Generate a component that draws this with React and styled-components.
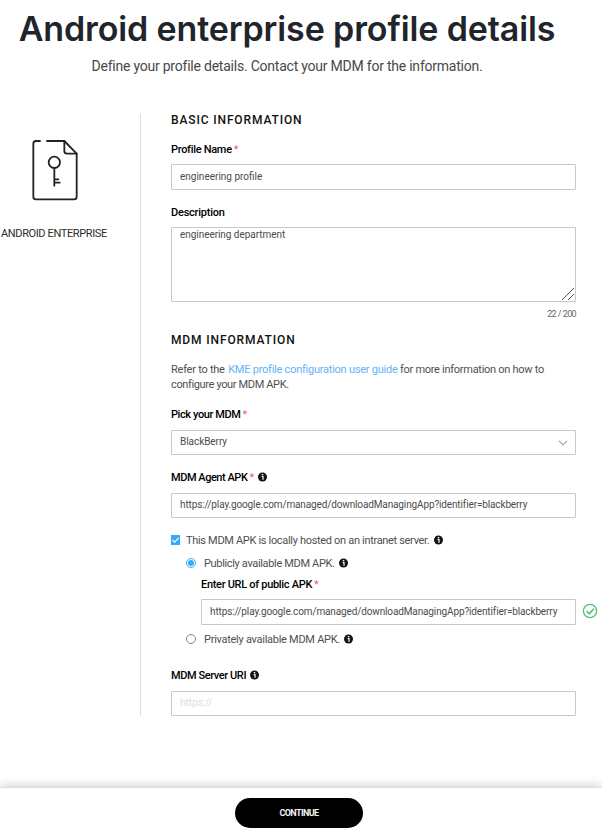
import React, { useState } from "react";
import styled, { createGlobalStyle } from "styled-components";

const GlobalStyle = createGlobalStyle`
  * { box-sizing: border-box; }
  body { margin: 0; background: #fff; font-family: Roboto, "Noto Sans", sans-serif; }
`;

const Page = styled.div`
  display: flex;
  flex-direction: column;
  height: 836px;
  overflow: hidden;
`;
const Header = styled.header`
  width: 574px;
  height: 76px;
  padding-top: 1px;
  text-align: center;
  white-space: nowrap;
`;
const Title = styled.h1`
  margin: 0;
  font: 600 34px/56px Inter, sans-serif;
  letter-spacing: -0.12px;
  color: #21252b;
`;
const Subtitle = styled.p`
  margin: -1px 0 0;
  font-size: 14px;
  line-height: 20px;
  letter-spacing: -0.226px;
  color: #484848;
`;
const Body = styled.main`
  display: grid;
  grid-template-columns: 140px 436px;
  margin-top: 38px;
  height: 602px;
`;
const Sidebar = styled.aside`
  padding: 24px 0 0 1px;
`;
const FileIcon = styled.svg`
  display: block;
  margin-left: 29px;
`;
const SidebarLabel = styled.div`
  margin-top: 24px;
  font-size: 11px;
  line-height: 14px;
  letter-spacing: -0.37px;
  white-space: nowrap;
  color: #2c2c2c;
`;
const Form = styled.form`
  display: flex;
  flex-direction: column;
  padding-left: 30px;
  border-left: 1px solid #dedede;
`;
const SectionTitle = styled.h2`
  margin: ${(p) => p.$top || 0}px 0 0;
  font-size: 12px;
  font-weight: 500;
  line-height: 12px;
  letter-spacing: 0.87px;
  color: #111;
`;
const Label = styled.label`
  display: flex;
  align-items: center;
  height: 14px;
  margin-top: ${(p) => p.$top}px;
  padding-top: 1px;
  font-size: 11px;
  font-weight: 500;
  line-height: 14px;
  letter-spacing: ${(p) => p.$track || -0.3}px;
  white-space: nowrap;
  color: #000;
`;
const Star = styled.span`
  margin-left: 2px;
  font-weight: 400;
  color: #f0645f;
`;
const Input = styled.input`
  display: block;
  width: 100%;
  height: ${(p) => p.$height || 25}px;
  margin: ${(p) => p.$top || 9}px 0 0;
  padding: 0 8px ${(p) => p.$lift || 1}px;
  border: 1px solid #c8c8c8;
  border-radius: 1px;
  outline: none;
  background: #fff;
  font: 400 10px Roboto, sans-serif;
  letter-spacing: ${(p) => p.$track || 0}px;
  color: #4c4c4c;
  &::placeholder { color: #dcdcdc; }
`;
const AreaBox = styled.div`
  display: grid;
  height: 75px;
  margin-top: 8px;
`;
const Area = styled.textarea`
  grid-area: 1 / 1;
  margin: 0;
  padding: 0 8px;
  border: 1px solid #c8c8c8;
  border-radius: 1px;
  outline: none;
  resize: none;
  font: 400 10px/13px Roboto, sans-serif;
  letter-spacing: -0.05px;
  color: #4c4c4c;
`;
const Grip = styled.svg`
  grid-area: 1 / 1;
  place-self: end;
  margin: 0 2px 2px 0;
  z-index: 1;
`;
const Counter = styled.div`
  margin-top: 6px;
  text-align: right;
  font-size: 9px;
  line-height: 12px;
  letter-spacing: -0.68px;
  word-spacing: 0.4px;
  color: #666;
`;
const Note = styled.p`
  margin: 16px 0 0;
  font-size: 11px;
  line-height: 15px;
  letter-spacing: -0.24px;
  white-space: nowrap;
  color: #4f4f4f;
`;
const NoteTail = styled.span`
  letter-spacing: -0.36px;
`;
const Link = styled.a`
  margin-left: 1px;
  color: #64b2f8;
`;
const NoteEnd = styled.span`
  letter-spacing: -0.28px;
`;
const Select = styled.div`
  display: flex;
  align-items: center;
  justify-content: space-between;
  height: 25px;
  margin-top: 9px;
  padding: 0 7px 2px 8px;
  border: 1px solid #c8c8c8;
  border-radius: 1px;
  font-size: 10px;
  letter-spacing: -0.05px;
  color: #4c4c4c;
`;
const Chevron = styled.svg`
  margin-top: 2px;
`;
const Option = styled.label`
  display: flex;
  align-items: center;
  height: 14px;
  margin: ${(p) => p.$top}px 0 0 ${(p) => p.$indent || 0}px;
  font-size: 11px;
  letter-spacing: ${(p) => p.$track || -0.32}px;
  white-space: nowrap;
  color: #4f4f4f;
`;
const Mark = styled.svg`
  flex: none;
  margin-right: ${(p) => p.$gap}px;
`;
const Info = styled.svg`
  flex: none;
  margin: ${(p) => (p.$raised ? "-1px" : "0")} 0 0 ${(p) => p.$gap || 4}px;
`;
const Nested = styled.div`
  padding-left: 30px;
`;
const UrlRow = styled.div`
  display: grid;
  grid-template-columns: 375px 16px;
  column-gap: 6px;
  width: 397px;
  align-items: center;
  margin-top: 8px;
`;
const UrlInput = styled(Input)`
  margin: 0;
`;
const ValidIcon = styled.svg`
  margin-top: -2px;
`;
const Footer = styled.footer`
  display: flex;
  justify-content: center;
  height: 49px;
  margin-top: auto;
  padding: 10px 4px 0 0;
  border-top: 1px solid #dedede;
  box-shadow: 0 -2px 9px rgba(0, 0, 0, 0.17);
`;
const Button = styled.button`
  width: 128px;
  height: 30px;
  padding: 0;
  border: 0;
  border-radius: 15px;
  background: #000;
  color: #f2f2f2;
  font: 700 9px Roboto, sans-serif;
  letter-spacing: -0.58px;
`;

const InfoIcon = ({ gap, raised }) => (
  <Info $gap={gap} $raised={raised} width="9" height="10" viewBox="0 0 9 10">
    <circle cx="4.5" cy="5" r="4.5" fill="#151515" />
    <path d="M3.6 4.5h1.4v3.3" stroke="#fff" strokeWidth="1.2" fill="none" />
    <rect x="3.8" y="2" width="1.5" height="1.3" fill="#fff" />
  </Info>
);

const RadioMark = ({ on }) => (
  <Mark $gap={8} width="10" height="11" viewBox="0 0 10 11">
    <circle cx="5" cy="5" r="4.5" fill="#fff" stroke={on ? "#38a9fa" : "#858585"} />
    {on && <circle cx="5" cy="5" r="3" fill="#38a9fa" />}
  </Mark>
);

const AGENT_URL = "https://play.google.com/managed/downloadManagingApp?identifier=blackberry";

export default function App() {
  const [name, setName] = useState("engineering profile");
  const [description, setDescription] = useState("engineering department");
  const [agent, setAgent] = useState(AGENT_URL);
  const [publicUrl, setPublicUrl] = useState(AGENT_URL);

  return (
    <Page>
      <GlobalStyle />
      <Header>
        <Title>Android enterprise profile details</Title>
        <Subtitle>Define your profile details. Contact your MDM for the information.</Subtitle>
      </Header>
      <Body>
        <Sidebar>
          <FileIcon width="50" height="65" viewBox="90 99 150 195" fill="none" stroke="#222" strokeWidth="5.4" strokeLinecap="round" strokeLinejoin="round">
            <path d="M120 108h-12q-8 0-8 8v159q0 8 8 8h114q8 0 8-8V146l-37-38h-52" />
            <path d="M193 108v30q0 8 8 8h29" />
            <circle cx="163" cy="172" r="17" />
            <path d="M163 189v53M163 223h12M163 233h16" />
          </FileIcon>
          <SidebarLabel>ANDROID ENTERPRISE</SidebarLabel>
        </Sidebar>
        <Form>
          <SectionTitle>BASIC INFORMATION</SectionTitle>
          <Label $top={16} $track={-0.3}>Profile Name<Star>*</Star></Label>
          <Input $height={26} $top={8} value={name} onChange={(e) => setName(e.target.value)} />
          <Label $top={15} $track={-0.22}>Description</Label>
          <AreaBox>
            <Area value={description} onChange={(e) => setDescription(e.target.value)} />
            <Grip width="12" height="12" viewBox="0 0 12 12" stroke="#555" strokeWidth="1">
              <path d="M0 12L12 0M6 12l6-6" />
            </Grip>
          </AreaBox>
          <Counter>{description.length} / 200</Counter>
          <SectionTitle $top={14}>MDM INFORMATION</SectionTitle>
          <Note>
            Refer to the <Link>KME profile configuration user guide</Link>
            <NoteEnd> for more information on how to</NoteEnd>
            <br />
            <NoteTail>configure your MDM APK.</NoteTail>
          </Note>
          <Label $top={15} $track={-0.4}>Pick your MDM<Star>*</Star></Label>
          <Select>
            BlackBerry
            <Chevron width="10" height="6" viewBox="0 0 10 6" fill="none" stroke="#aaa" strokeWidth="1.1">
              <path d="M1 1l4 4 4-4" />
            </Chevron>
          </Select>
          <Label $top={15} $track={-0.46}>MDM Agent APK<Star>*</Star><InfoIcon raised /></Label>
          <Input $track={-0.13} $lift={3} value={agent} onChange={(e) => setAgent(e.target.value)} />
          <Option $top={15}>
            <Mark $gap={6} width="9" height="10" viewBox="0 0 9 10">
              <rect width="9" height="10" fill="#38a9fa" />
              <path d="M1.5 4.8l2.2 2.4 4-4.4" fill="none" stroke="#fff" strokeWidth="1.2" />
            </Mark>
            This MDM APK is locally hosted on an intranet server.
            <InfoIcon gap={5} />
          </Option>
          <Option $top={9} $indent={15} $track={-0.34}>
            <RadioMark on />
            Publicly available MDM APK.
            <InfoIcon />
          </Option>
          <Nested>
            <Label $top={7}>Enter URL of public APK<Star>*</Star></Label>
            <UrlRow>
              <UrlInput $height={26} $track={-0.13} value={publicUrl} onChange={(e) => setPublicUrl(e.target.value)} />
              <ValidIcon width="16" height="16" viewBox="0 0 16 16" fill="none" stroke="#4cc273" strokeWidth="1.3">
                <circle cx="8" cy="8" r="6.6" />
                <path d="M4.6 8l2.7 2.8 4.5-5.1" strokeWidth="1.5" />
              </ValidIcon>
            </UrlRow>
          </Nested>
          <Option $top={7} $indent={15} $track={-0.27}>
            <RadioMark />
            Privately available MDM APK.
            <InfoIcon />
          </Option>
          <Label $top={22} $track={-0.41}>MDM Server URI<InfoIcon raised /></Label>
          <Input $lift={3} placeholder="https://" />
        </Form>
      </Body>
      <Footer>
        <Button type="button">CONTINUE</Button>
      </Footer>
    </Page>
  );
}
